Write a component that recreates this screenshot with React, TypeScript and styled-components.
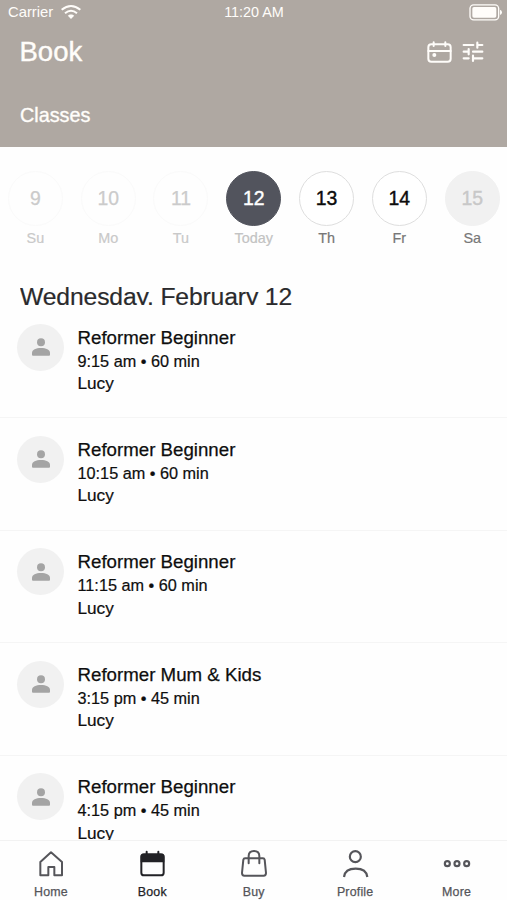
import React from "react";
import styled, { createGlobalStyle } from "styled-components";

const GlobalStyle = createGlobalStyle`
  * { box-sizing: border-box; }
  html, body { margin: 0; padding: 0; overflow: hidden; background: #fefefe; }
  body { font-family: "Liberation Sans", Arial, sans-serif; }
`;

const Screen = styled.div`
  width: 507px;
  height: 900px;
  display: flex;
  flex-direction: column;
  overflow: hidden;
  background: #fefefe;
  color: #111;
`;

const Header = styled.header`
  flex: none;
  height: 147px;
  background: #afa8a2;
  color: #fffdfa;
`;

const StatusBar = styled.div`
  height: 24px;
  display: grid;
  grid-template-columns: 1fr auto 1fr;
  align-items: center;
  padding: 0 5px 0 8px;
`;

const Carrier = styled.div`
  display: flex;
  align-items: center;
  gap: 8px;
  font-size: 14.8px;
  line-height: 24px;
`;

const Clock = styled.div`
  padding-right: 2px;
  font-size: 14.4px;
  line-height: 24px;
`;

const BatterySlot = styled.div`
  display: flex;
  justify-content: flex-end;
`;

const TitleBar = styled.div`
  height: 56px;
  display: flex;
  align-items: center;
  justify-content: space-between;
  padding: 0 23px 0 19.5px;
`;

const Title = styled.h1`
  margin: 0;
  font-size: 27.5px;
  font-weight: 400;
  line-height: 56px;
  -webkit-text-stroke: 0.4px currentColor;
`;

const Actions = styled.div`
  display: flex;
  align-items: center;
  gap: 10px;
`;

const Tab = styled.div`
  padding: 21px 0 0 20px;
  font-size: 19.8px;
  line-height: 28px;
  -webkit-text-stroke: 0.35px currentColor;
`;

const Week = styled.div`
  flex: none;
  display: grid;
  grid-template-columns: repeat(7, 72.8px);
  margin-left: -1px;
  height: 132px;
  padding-top: 23.5px;
`;

const Day = styled.div`
  display: flex;
  flex-direction: column;
  align-items: center;
`;

type DayKind = "past" | "today" | "open" | "closed";

const dayStyles: Record<DayKind, { bg: string; border: string; text: string; label: string }> = {
  past: { bg: "transparent", border: "#fafafa", text: "#cbcbcb", label: "#c9c9c9" },
  today: { bg: "#52545d", border: "#52545d", text: "#ffffff", label: "#c3c3c3" },
  open: { bg: "#ffffff", border: "#dedede", text: "#0c0c0c", label: "#777777" },
  closed: { bg: "#f1f1f1", border: "#f1f1f1", text: "#c8c8c8", label: "#777777" },
};

const DayCircle = styled.div<{ $kind: DayKind }>`
  width: 55px;
  height: 55px;
  border-radius: 50%;
  display: flex;
  align-items: center;
  justify-content: center;
  background: ${(p) => dayStyles[p.$kind].bg};
  border: 1px solid ${(p) => dayStyles[p.$kind].border};
  color: ${(p) => dayStyles[p.$kind].text};
  font-size: 19.4px;
  -webkit-text-stroke: ${(p) => (p.$kind === "past" ? "0.25px" : "0.4px")} currentColor;
`;

const DayLabel = styled.div<{ $kind: DayKind }>`
  margin-top: 3px;
  font-size: 14.4px;
  line-height: 18px;
  color: ${(p) => dayStyles[p.$kind].label};
  -webkit-text-stroke: 0.2px currentColor;
`;

const DateHeading = styled.h2`
  flex: none;
  margin: 0 0 1px 20px;
  height: 26px;
  overflow: hidden;
  font-size: 24.7px;
  letter-spacing: -0.13px;
  font-weight: 400;
  line-height: 35px;
  color: #2a2a2c;
  white-space: nowrap;
  -webkit-text-stroke: 0.2px currentColor;
`;

const ClassList = styled.main`
  flex: 1;
  min-height: 0;
  overflow: hidden;
`;

const ClassRow = styled.div`
  height: 112.4px;
  display: flex;
  gap: 13.5px;
  padding: 17.5px 0 0 17px;
  border-bottom: 1px solid #f5f5f5;
`;

const Avatar = styled.div`
  flex: none;
  width: 47px;
  height: 47px;
  border-radius: 50%;
  background: #f1f1f1;
  display: flex;
  align-items: center;
  justify-content: center;
`;

const ClassName = styled.div`
  margin-top: 2px;
  font-size: 18.7px;
  line-height: 24px;
  color: #0e0e0e;
  -webkit-text-stroke: 0.25px currentColor;
`;

const ClassTime = styled.div`
  font-size: 16.25px;
  line-height: 23.5px;
  color: #0e0e0e;
  -webkit-text-stroke: 0.2px currentColor;
`;

const Teacher = styled.div`
  font-size: 17.2px;
  line-height: 20.5px;
  color: #0e0e0e;
  -webkit-text-stroke: 0.2px currentColor;
`;

const Nav = styled.nav`
  flex: none;
  height: 60px;
  display: grid;
  grid-template-columns: repeat(5, 1fr);
  border-top: 1px solid #f2f2f2;
  background: #fefefe;
`;

const NavItem = styled.div<{ $active?: boolean }>`
  display: flex;
  flex-direction: column;
  align-items: center;
  padding: 9px 0 0 0.5px;
  color: ${(p) => (p.$active ? "#222226" : "#55555a")};
`;

const NavLabel = styled.div`
  margin-top: 4px;
  font-size: 12.4px;
  letter-spacing: 0.2px;
  line-height: 16px;
  -webkit-text-stroke: 0.25px currentColor;
`;

const WifiIcon = () => (
  <svg width="20" height="16" viewBox="0 0 60 48" fill="none" stroke="currentColor" strokeWidth="6">
    <path d="M2 17.500Q30 -6 58 17.500" />
    <path d="M12 28Q30 13 48 28" />
    <path d="M30 31.500c-4 0-7 1.500-9.500 4L30 45l9.500-9.500c-2.500-2.500-5.500-4-9.500-4z" fill="currentColor" stroke="none" />
  </svg>
);

const BatteryIcon = () => (
  <svg width="33" height="17" viewBox="0 0 99 51" fill="none">
    <rect x="3" y="2.500" width="86" height="45" rx="11" stroke="currentColor" strokeWidth="4" />
    <rect x="10" y="9" width="72" height="32" rx="5" fill="currentColor" />
    <path d="M93 17q6 2 6 8t-6 8z" fill="currentColor" />
  </svg>
);

const CalendarIcon = () => (
  <svg width="25" height="23" viewBox="0 0 75 69" fill="none" stroke="currentColor" strokeWidth="6" strokeLinecap="round">
    <rect x="4" y="10" width="67" height="52" rx="9" />
    <path d="M4 30H71M20 4V15M55 4V15" />
    <circle cx="22" cy="42" r="6" fill="currentColor" stroke="none" />
  </svg>
);

const TuneIcon = () => (
  <svg width="22" height="22" viewBox="0 0 66 66" fill="none" stroke="currentColor" strokeWidth="6.500" strokeLinecap="round">
    <path d="M5 12H34M46 12H61M46 5V20" />
    <path d="M5 32H19M33 32H61M20 24V40" />
    <path d="M5 52H20M33 52H61M33 44V60" />
  </svg>
);

const PersonIcon = () => (
  <svg width="18" height="18" viewBox="0 0 54 54" fill="#a4a4a4">
    <circle cx="27" cy="13" r="12" />
    <path d="M0 45c0-10 12-15 27-15s27 5 27 15v5q0 3-3 3H3q-3 0-3-3z" />
  </svg>
);

const navProps = {
  width: 28,
  height: 30,
  viewBox: "0 0 84 90",
  fill: "none",
  stroke: "currentColor",
  strokeWidth: 6,
};

const HomeIcon = () => (
  <svg {...navProps} strokeLinejoin="round">
    <path d="M10 76V36L42 7L75 36V76H52V51H34V76Z" />
  </svg>
);

const BookIcon = () => (
  <svg {...navProps}>
    <rect x="10" y="13" width="67" height="63" rx="8" />
    <path d="M8 37V20q0-8 8-8h55q8 0 8 8V37Z" fill="currentColor" stroke="none" />
    <path d="M26 5V16M61 5V16" strokeLinecap="round" />
  </svg>
);

const BuyIcon = () => (
  <svg {...navProps} strokeLinejoin="round" strokeLinecap="round">
    <path d="M15 25H69q4 0 5 4l4 40q0 8-7 8H13q-7 0-7-8l4-40q1-4 5-4z" />
    <path d="M26 40V18Q26 3 42 3T58 18V40" />
  </svg>
);

const ProfileIcon = () => (
  <svg {...navProps} strokeWidth="6.500">
    <ellipse cx="43" cy="20" rx="16.500" ry="16.500" />
    <path d="M9 81Q12 56 44 56T79 81" />
  </svg>
);

const MoreIcon = () => (
  <svg {...navProps} strokeWidth="6.500">
    <circle cx="13" cy="41" r="7.500" />
    <circle cx="42" cy="41" r="7.500" />
    <circle cx="71" cy="41" r="7.500" />
  </svg>
);

const days: { date: string; label: string; kind: DayKind }[] = [
  { date: "9", label: "Su", kind: "past" },
  { date: "10", label: "Mo", kind: "past" },
  { date: "11", label: "Tu", kind: "past" },
  { date: "12", label: "Today", kind: "today" },
  { date: "13", label: "Th", kind: "open" },
  { date: "14", label: "Fr", kind: "open" },
  { date: "15", label: "Sa", kind: "closed" },
];

const classes = [
  { name: "Reformer Beginner", time: "9:15 am • 60 min", teacher: "Lucy" },
  { name: "Reformer Beginner", time: "10:15 am • 60 min", teacher: "Lucy" },
  { name: "Reformer Beginner", time: "11:15 am • 60 min", teacher: "Lucy" },
  { name: "Reformer Mum & Kids", time: "3:15 pm • 45 min", teacher: "Lucy" },
  { name: "Reformer Beginner", time: "4:15 pm • 45 min", teacher: "Lucy" },
];

const navItems = [
  { label: "Home", Icon: HomeIcon },
  { label: "Book", Icon: BookIcon, active: true },
  { label: "Buy", Icon: BuyIcon },
  { label: "Profile", Icon: ProfileIcon },
  { label: "More", Icon: MoreIcon },
];

export default function App() {
  return (
    <>
      <GlobalStyle />
      <Screen>
        <Header>
          <StatusBar>
            <Carrier>
              Carrier
              <WifiIcon />
            </Carrier>
            <Clock>11:20 AM</Clock>
            <BatterySlot>
              <BatteryIcon />
            </BatterySlot>
          </StatusBar>
          <TitleBar>
            <Title>Book</Title>
            <Actions>
              <CalendarIcon />
              <TuneIcon />
            </Actions>
          </TitleBar>
          <Tab>Classes</Tab>
        </Header>
        <Week>
          {days.map((d) => (
            <Day key={d.date}>
              <DayCircle $kind={d.kind}>{d.date}</DayCircle>
              <DayLabel $kind={d.kind}>{d.label}</DayLabel>
            </Day>
          ))}
        </Week>
        <DateHeading>Wednesday, February 12</DateHeading>
        <ClassList>
          {classes.map((c) => (
            <ClassRow key={c.time}>
              <Avatar>
                <PersonIcon />
              </Avatar>
              <div>
                <ClassName>{c.name}</ClassName>
                <ClassTime>{c.time}</ClassTime>
                <Teacher>{c.teacher}</Teacher>
              </div>
            </ClassRow>
          ))}
        </ClassList>
        <Nav>
          {navItems.map(({ label, Icon, active }) => (
            <NavItem key={label} $active={active}>
              <Icon />
              <NavLabel>{label}</NavLabel>
            </NavItem>
          ))}
        </Nav>
      </Screen>
    </>
  );
}
